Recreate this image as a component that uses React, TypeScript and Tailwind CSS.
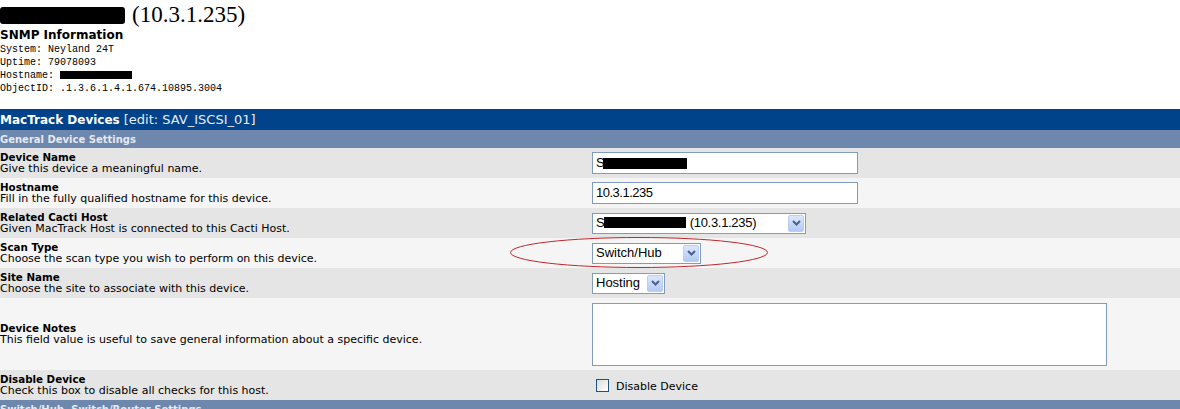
import React from 'react';

const sans = "font-['DejaVu_Sans',Verdana,sans-serif]";
const arial = "font-['Liberation_Sans',Arial,sans-serif]";

const Arrow: React.FC = () => (
  <span className="flex h-[17px] w-[16px] items-center justify-center rounded-[2px] border border-[#b9cdf5] bg-gradient-to-b from-[#dce7fd] to-[#b3c9f6]">
    <svg width="9" height="6" viewBox="0 0 9 6">
      <path d="M1 1 L4.5 4.5 L8 1" fill="none" stroke="#4d6185" strokeWidth="2" />
    </svg>
  </span>
);

const Select: React.FC<{ width: string; children: React.ReactNode }> = ({ width, children }) => (
  <div className={`flex h-[21px] items-center justify-between border border-[#7f9db9] bg-white pl-[3px] pr-[1px] ${width}`}>
    <span className={`${arial} text-[13px] text-black whitespace-nowrap`}>{children}</span>
    <Arrow />
  </div>
);

const Row: React.FC<{ title: string; desc: string; bg: string; h?: string; children: React.ReactNode }> = ({
  title,
  desc,
  bg,
  h = 'h-[30px]',
  children,
}) => (
  <div className={`flex items-center ${bg} ${h}`}>
    <div className={`w-[592px] ${sans} text-[11px] leading-[12px] text-black`}>
      <div className="font-bold text-[10.3px]">{title}</div>
      <div>{desc}</div>
    </div>
    <div className="flex-1">{children}</div>
  </div>
);

export default function App() {
  return (
    <div className="relative w-[1180px] h-[409px] overflow-hidden bg-white">
      {/* device header */}
      <div className="pt-[3px]">
        <div className="flex items-center font-['Liberation_Serif','Times_New_Roman',serif] text-[23px] leading-[24px] text-black">
          <span className="inline-block h-[17px] w-[125px] rounded-[3px] bg-black" />
          <span className="ml-[7px]">(10.3.1.235)</span>
        </div>
        <div className={`${sans} mt-[1px] text-[12px] font-bold leading-[15px]`}>SNMP Information</div>
        <div className="font-['Liberation_Mono','Courier_New',monospace] text-[10px] leading-[13px] text-black">
          <div>System: Neyland 24T</div>
          <div>Uptime: 79078093</div>
          <div>
            Hostname: <span className="inline-block h-[8px] w-[72px] bg-black align-middle" />
          </div>
          <div>ObjectID: .1.3.6.1.4.1.674.10895.3004</div>
        </div>
      </div>

      {/* MacTrack table */}
      <div className="mt-[14px]">
        <div className={`flex h-[21px] items-center bg-[#00438a] ${sans} text-[13px] text-white`}>
          <span className="font-bold text-[12px]">MacTrack Devices</span>
          <span className="ml-[4px] text-[#e8ecf4]">[edit: SAV_ISCSI_01]</span>
        </div>
        <div className={`flex h-[18px] items-center bg-[#6d87ad] ${sans} text-[10px] font-bold text-[#e5e9f0]`}>
          General Device Settings
        </div>

        <Row title="Device Name" desc="Give this device a meaningful name." bg="bg-[#e5e5e5]">
          <div className="flex h-[22px] w-[266px] items-center border border-[#7f9db9] bg-white pl-[3px]">
            <span className={`${arial} text-[13px]`}>S</span>
            <span className="ml-[-2px] inline-block h-[11px] w-[84px] bg-black" />
          </div>
        </Row>
        <Row title="Hostname" desc="Fill in the fully qualified hostname for this device." bg="bg-[#f5f5f5]">
          <div className="flex h-[22px] w-[266px] items-center border border-[#7f9db9] bg-white pl-[3px]">
            <span className={`${arial} text-[13px] tracking-[-0.5px]`}>10.3.1.235</span>
          </div>
        </Row>
        <Row title="Related Cacti Host" desc="Given MacTrack Host is connected to this Cacti Host." bg="bg-[#e5e5e5]">
          <Select width="w-[214px]">
            <span className="tracking-[-0.3px]">
              S<span className="inline-block h-[11px] w-[82px] bg-black align-[-1px]" /> (10.3.1.235)
            </span>
          </Select>
        </Row>
        <Row title="Scan Type" desc="Choose the scan type you wish to perform on this device." bg="bg-[#f5f5f5]">
          <Select width="w-[109px]">Switch/Hub</Select>
        </Row>
        <Row title="Site Name" desc="Choose the site to associate with this device." bg="bg-[#e5e5e5]">
          <Select width="w-[73px]">Hosting</Select>
        </Row>
        <Row
          title="Device Notes"
          desc="This field value is useful to save general information about a specific device."
          bg="bg-[#f5f5f5]"
          h="h-[72px]"
        >
          <div className="h-[63px] w-[515px] border border-[#7f9db9] bg-white" />
        </Row>
        <Row title="Disable Device" desc="Check this box to disable all checks for this host." bg="bg-[#e5e5e5]">
          <div className="flex items-center pl-[4px]">
            <span className="h-[13px] w-[13px] border border-[#1c5180] bg-gradient-to-br from-[#dcdcd7] to-white" />
            <span className={`${sans} ml-[7px] mt-[4px] text-[11px]`}>Disable Device</span>
          </div>
        </Row>
        <div className={`flex h-[18px] items-center bg-[#6d87ad] ${sans} text-[10px] font-bold text-[#e5e9f0]`}>
          Switch/Hub, Switch/Router Settings
        </div>
      </div>

      {/* annotation ellipse */}
      <svg className="absolute left-[509px] top-[236px]" width="260" height="33" viewBox="0 0 260 33">
        <ellipse cx="130" cy="16.5" rx="128.5" ry="15" fill="none" stroke="#c0282d" strokeWidth="1" />
      </svg>
    </div>
  );
}
